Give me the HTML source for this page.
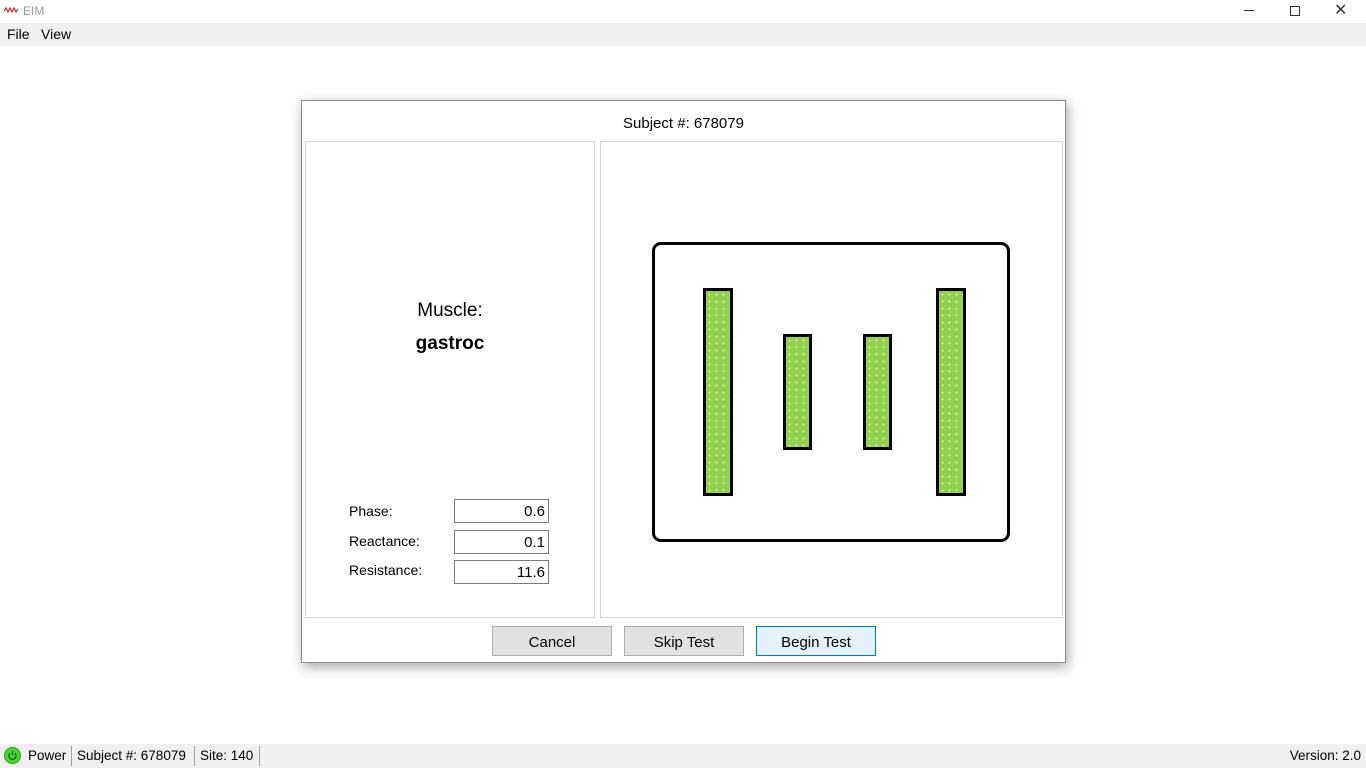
<!DOCTYPE html>
<html><head><style>
body{margin:0;width:1366px;height:768px;position:relative;background:#fff;font-family:"Segoe UI","Liberation Sans",sans-serif;overflow:hidden;color:#000}
.a{position:absolute}
.tb{left:0;top:0;width:1366px;height:23px;background:#fff}
.menu{left:0;top:23px;width:1366px;height:23px;background:#f0f0f0;font-size:14px}
.dlg{left:301px;top:100px;width:763px;height:561px;border:1px solid #8c8c8c;background:#fff;box-shadow:2px 4px 12px rgba(0,0,0,.35)}
.pnl{border:1px solid #d4d4d4;background:#fff}
.btn{top:626px;width:120px;height:30px;border:1px solid #adadad;background:#e1e1e1;font-size:15px;text-align:center;line-height:31px;box-sizing:border-box}
.inp{left:454px;width:95px;height:24px;border:1px solid #7a7a7a;box-sizing:border-box;text-align:right;padding-right:3px;font-size:15px;line-height:24px}
.lbl{left:349px;font-size:14px}
.sb{left:0;top:744px;width:1366px;height:24px;background:#f0f0f0;font-size:13.5px}
.bar{background:#92d050 radial-gradient(circle,#d8f0b0 0.8px,transparent 1.2px) 0 0/7px 7px;border:3px solid #000;box-sizing:border-box}
</style></head><body>
<div class="a tb"></div>
<svg class="a" style="left:4px;top:6px" width="14" height="8"><polyline points="0,5 2,2 4,6 6,2 8,6 10,2 12,6 14,3" fill="none" stroke="#c0392b" stroke-width="1.3"/></svg>
<div class="a" style="left:23px;top:4px;font-size:12px;color:#999">EIM</div>
<div class="a" style="left:1244px;top:10px;width:10px;height:1px;background:#333"></div>
<div class="a" style="left:1290px;top:6px;width:8px;height:8px;border:1px solid #333"></div>
<div class="a" style="left:1334px;top:0px;font-size:16px;color:#333">✕</div>
<div class="a menu"><span class="a" style="left:7px;top:3px">File</span><span class="a" style="left:41px;top:3px">View</span></div>

<div class="a dlg"></div>
<div class="a" style="left:301px;top:115px;width:765px;text-align:center;font-size:15px">Subject #: 678079</div>
<div class="a pnl" style="left:305px;top:141px;width:288px;height:475px"></div>
<div class="a pnl" style="left:600px;top:141px;width:461px;height:475px"></div>
<div class="a" style="left:305px;top:300px;width:290px;text-align:center;font-size:19px">Muscle:</div>
<div class="a" style="left:305px;top:333px;width:290px;text-align:center;font-size:19px;font-weight:bold">gastroc</div>
<div class="a lbl" style="top:503px">Phase:</div>
<div class="a lbl" style="top:533px">Reactance:</div>
<div class="a lbl" style="top:562px">Resistance:</div>
<div class="a inp" style="top:499px">0.6</div>
<div class="a inp" style="top:530px">0.1</div>
<div class="a inp" style="top:560px">11.6</div>

<div class="a" style="left:652px;top:242px;width:358px;height:300px;border:3px solid #000;border-radius:9px;box-sizing:border-box"></div>
<div class="a bar" style="left:703px;top:288px;width:30px;height:208px"></div>
<div class="a bar" style="left:783px;top:334px;width:29px;height:116px"></div>
<div class="a bar" style="left:863px;top:334px;width:29px;height:116px"></div>
<div class="a bar" style="left:936px;top:288px;width:30px;height:208px"></div>

<div class="a btn" style="left:492px">Cancel</div>
<div class="a btn" style="left:624px">Skip Test</div>
<div class="a btn" style="left:756px;border-color:#0078d7;background:#e5f1fb">Begin Test</div>

<div class="a sb">
<div class="a" style="left:4px;top:3px;width:17px;height:17px;border-radius:50%;background:#4cd137;border:1px solid #2a9d1e;box-sizing:border-box"></div>
<svg class="a" style="left:7px;top:6px" width="11" height="11"><path d="M3 3.2A3.6 3.6 0 1 0 8 3.2M5.5 1V5.5" fill="none" stroke="#1a5e12" stroke-width="1.3"/></svg>
<span class="a" style="left:28px;top:4px">Power</span>
<div class="a" style="left:71px;top:2px;width:1px;height:20px;background:#a0a0a0"></div>
<span class="a" style="left:77px;top:4px">Subject #:&nbsp;678079</span>
<div class="a" style="left:194px;top:2px;width:1px;height:20px;background:#a0a0a0"></div>
<span class="a" style="left:200px;top:4px">Site:&nbsp;140</span>
<div class="a" style="left:259px;top:2px;width:1px;height:20px;background:#a0a0a0"></div>
<span class="a" style="right:5px;top:4px">Version: 2.0</span>
</div>
</body></html>
